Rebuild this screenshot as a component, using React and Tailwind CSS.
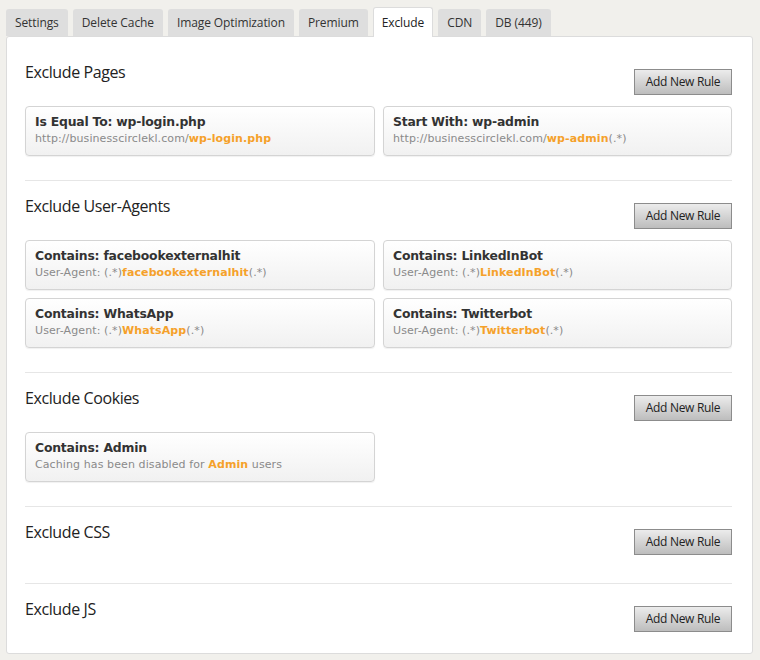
import React from "react";

const tabs = ["Settings", "Delete Cache", "Image Optimization", "Premium", "Exclude", "CDN", "DB (449)"];

const sections = [
  {
    title: "Exclude Pages",
    rules: [
      { title: "Is Equal To: wp-login.php", pre: "http://businesscirclekl.com/", hl: "wp-login.php", post: "" },
      { title: "Start With: wp-admin", pre: "http://businesscirclekl.com/", hl: "wp-admin", post: "(.*)" },
    ],
  },
  {
    title: "Exclude User-Agents",
    rules: [
      { title: "Contains: facebookexternalhit", pre: "User-Agent: (.*)", hl: "facebookexternalhit", post: "(.*)" },
      { title: "Contains: LinkedInBot", pre: "User-Agent: (.*)", hl: "LinkedInBot", post: "(.*)" },
      { title: "Contains: WhatsApp", pre: "User-Agent: (.*)", hl: "WhatsApp", post: "(.*)" },
      { title: "Contains: Twitterbot", pre: "User-Agent: (.*)", hl: "Twitterbot", post: "(.*)" },
    ],
  },
  {
    title: "Exclude Cookies",
    rules: [
      { title: "Contains: Admin", pre: "Caching has been disabled for ", hl: "Admin", post: " users" },
    ],
  },
  { title: "Exclude CSS", rules: [] },
  { title: "Exclude JS", rules: [] },
];

const RuleCard = ({ rule }) => (
  <div className="h-[50px] rounded-[4px] border border-[#d4d4d4] bg-gradient-to-b from-white to-[#f1f1f1] pl-[9px] pt-[6px] shadow-[0_1px_1px_rgba(0,0,0,0.06)] font-['DejaVu_Sans',sans-serif]">
    <div className="text-[12.4px] font-bold leading-[17px] text-[#333] tracking-[-0.2px]">{rule.title}</div>
    <div className="mt-[1px] text-[11px] leading-[16px] text-[#8a8a8a] tracking-[0.1px]">
      {rule.pre}
      <span className="font-bold text-[#f5a12a]">{rule.hl}</span>
      {rule.post}
    </div>
  </div>
);

const Section = ({ section, first, last }) => (
  <div
    className={`${last ? "" : "border-b border-[#e6e6e6]"} ${first ? "pt-4" : "pt-[15px]"} ${
      section.rules.length ? "pb-6" : last ? "pb-[21px]" : "pb-[28px]"
    }`}
  >
    <div className="flex items-start justify-between">
      <h2 className="text-[16px] leading-[20px] text-[#222] font-['Open_Sans',sans-serif] tracking-[-0.4px]">
        {section.title}
      </h2>
      <button className="mt-[7px] h-[26px] w-[98px] border border-[#8c8c8c] bg-gradient-to-b from-[#ececec] to-[#bdbdbd] text-[12px] text-[#222] font-['Open_Sans',sans-serif] tracking-[-0.3px]">
        Add New Rule
      </button>
    </div>
    {section.rules.length > 0 && (
      <div className="mt-[11px] grid grid-cols-[350px_349px] gap-x-2 gap-y-2">
        {section.rules.map((r, i) => (
          <RuleCard key={i} rule={r} />
        ))}
      </div>
    )}
  </div>
);

export default function App() {
  return (
    <div className="min-h-[660px] w-[760px] bg-[#f1f0ec] px-[6px] pt-[7px] font-['Open_Sans',sans-serif]">
      <div className="flex items-end gap-[5px]">
        {tabs.map((t) => {
          const active = t === "Exclude";
          return (
            <div
              key={t}
              className={
                active
                  ? "relative z-10 -mb-px h-[30px] rounded-t-[3px] border border-b-0 border-[#dcdcdc] bg-white px-[8px] pt-[6px] text-[12px] text-[#222] tracking-[-0.1px]"
                  : "h-[27px] rounded-t-[3px] bg-[#dedede] px-[9px] pt-[5px] text-[12px] text-[#333] tracking-[-0.1px]"
              }
            >
              {t}
            </div>
          );
        })}
      </div>
      <div className="h-[618px] w-[747px] rounded-[3px] border border-[#dcdcdc] bg-white pl-[18px] pr-[20px] pt-[9px]">
        {sections.map((s, i) => (
          <Section key={s.title} section={s} first={i === 0} last={i === sections.length - 1} />
        ))}
      </div>
    </div>
  );
}
